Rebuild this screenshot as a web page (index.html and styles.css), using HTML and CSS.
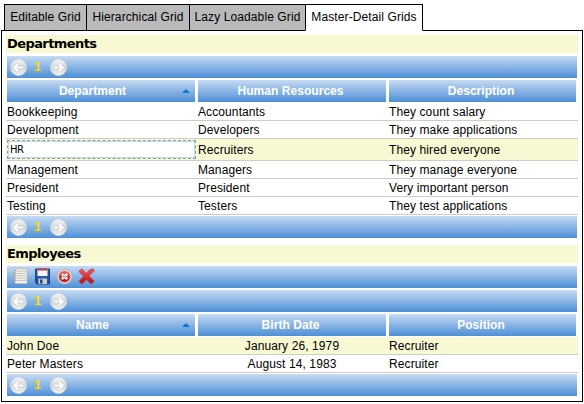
FILE: index.html
```html
<!DOCTYPE html>
<html lang="en">
<head>
<meta charset="utf-8">
<title>Master-Detail Grids</title>
<link rel="stylesheet" href="styles.css">
</head>
<body>
<svg class="defs" width="0" height="0" aria-hidden="true">
  <defs>
    <linearGradient id="ball" x1="0" y1="0" x2="0" y2="1"><stop offset="0" stop-color="#f6f6f6"/><stop offset=".5" stop-color="#d2d4d6"/><stop offset="1" stop-color="#f2f2f2"/></linearGradient>
    <linearGradient id="red" x1="0" y1="0" x2="0" y2="1"><stop offset="0" stop-color="#f0605c"/><stop offset="1" stop-color="#b80c10"/></linearGradient>
    <symbol id="prev" viewBox="0 0 17 17"><circle cx="8.5" cy="8.5" r="8" fill="url(#ball)" stroke="#dcdfe3" stroke-width=".7"/><path d="M13.2 8.5H4.5M8 4.8L4.3 8.5L8 12.2" fill="none" stroke="#c0c2c5" stroke-width="3.2"/><path d="M13.2 8.5H4.5M8 4.8L4.3 8.5L8 12.2" fill="none" stroke="#fff" stroke-width="2.2"/></symbol>
  </defs>
</svg>
<nav class="tabs">
  <a class="tab t1">Editable Grid</a><a class="tab t2">Hierarchical Grid</a><a class="tab t3">Lazy Loadable Grid</a><a class="tab t4 active">Master-Detail Grids</a>
</nav>
<main class="panel">
  <section class="departments">
    <h2>Departments</h2>
    <div class="bar pager"><svg><use href="#prev"/></svg><b>1</b><svg class="next"><use href="#prev"/></svg></div>
    <div class="head"><span>Department<i class="sort"></i></span><span>Human Resources</span><span>Description</span></div>
    <div class="row"><span>Bookkeeping</span><span>Accountants</span><span>They count salary</span></div>
    <div class="row"><span>Development</span><span>Developers</span><span>They make applications</span></div>
    <div class="row editing selected"><span class="field">HR</span><span>Recruiters</span><span>They hired everyone</span></div>
    <div class="row"><span>Management</span><span>Managers</span><span>They manage everyone</span></div>
    <div class="row"><span>President</span><span>President</span><span>Very important person</span></div>
    <div class="row"><span>Testing</span><span>Testers</span><span>They test applications</span></div>
    <div class="bar pager foot"><svg><use href="#prev"/></svg><b>1</b><svg class="next"><use href="#prev"/></svg></div>
  </section>
  <section class="employees">
    <h2>Employees</h2>
    <div class="bar tools">
      <svg viewBox="0 0 17 17"><path d="M3 .8H15V15.5H3Z" fill="#f4f1e9" stroke="#b6b6b2" stroke-width=".7"/><path d="M5 3.2H14M5 5.5H14M5 7.8H14M5 10.1H14M5 12.4H14" stroke="#c4c2bc"/><path d="M2 2.5H4.5M2 5H4.5M2 7.5H4.5M2 10H4.5M2 12.5H4.5" stroke="#c69c79"/></svg>
      <svg viewBox="0 0 17 17"><path d="M1.5 1H15.5V16H3L1.5 14.5Z" fill="#2456a5" stroke="#174384"/><path d="M3.5 1H13.5V8H3.5Z" fill="#f4f5f7"/><path d="M3.5 .7H13.5V2.5H3.5Z" fill="#c83c42"/><path d="M4.5 10.5H13V16H4.5Z" fill="#c9cdd0"/><path d="M6 11.5H8.5V15.5H6Z" fill="#294571"/></svg>
      <svg viewBox="0 0 17 17"><circle cx="8.5" cy="8.5" r="7.6" fill="#d6cdd3" stroke="#b6adb5" stroke-width=".6"/><circle cx="8.5" cy="8.5" r="5.6" fill="url(#red)"/><path d="M5.8 5.8L11.2 11.2M11.2 5.8L5.8 11.2" stroke="#fff" stroke-width="2.4"/><path d="M7 7L10 10M10 7L7 10" stroke="#d66468" stroke-width=".8"/></svg>
      <svg viewBox="0 0 17 17"><path d="M.8 3.5L3.7 .8L8.2 5.5Q11 1.4 14.8 .7L16.4 3Q13.2 4.7 11 8.1L16 13.2L13.2 16L8.4 11.5L3.8 16L1 13.6L5.7 8.2Z" fill="url(#red)" stroke="#b6242a" stroke-width=".6"/></svg>
    </div>
    <div class="bar pager second"><svg><use href="#prev"/></svg><b>1</b><svg class="next"><use href="#prev"/></svg></div>
    <div class="head"><span>Name<i class="sort"></i></span><span>Birth Date</span><span>Position</span></div>
    <div class="row selected"><span>John Doe</span><span class="date">January 26, 1979</span><span>Recruiter</span></div>
    <div class="row"><span>Peter Masters</span><span class="date">August 14, 1983</span><span>Recruiter</span></div>
    <div class="bar pager foot"><svg><use href="#prev"/></svg><b>1</b><svg class="next"><use href="#prev"/></svg></div>
  </section>
</main>
</body>
</html>
```
FILE: styles.css
```css
* { box-sizing: border-box; }
body { margin: 0; width: 584px; height: 404px; padding: 4px 1px 0; overflow: hidden; background: #fff; color: #000; font: 12px "Liberation Sans", Arial, sans-serif; }
.defs { position: absolute; }
.tabs { display: flex; height: 27px; margin-left: 3px; position: relative; }
.tab { height: 27px; border: 1px solid #000; margin-right: -1px; background: #bababa; text-align: center; line-height: 25px; white-space: nowrap; letter-spacing: .1px; }
.t1 { width: 83px; }
.t2 { width: 104px; }
.t3 { width: 117px; }
.t4 { width: 118px; }
.tab.active { background: #fff; border-bottom-color: #fff; }
.panel { width: 582px; height: 372px; margin-top: -1px; border: 1px solid #000; padding: 4px; }
section { width: 572px; }
h2 { margin: 0; height: 18px; padding-left: 1px; background: #f8f8d3; font: bold 13px/18px "DejaVu Sans", Verdana, sans-serif; letter-spacing: -.58px; }
.bar, .head span { background: linear-gradient(#c6dbf3, #8ab4e4 50%, #4c8fd8); }
.bar { width: 570px; height: 22px; margin: 3px 0 2px 1px; display: flex; align-items: center; }
.bar svg { width: 17px; height: 17px; flex: none; }
.pager { padding-left: 3px; }
.pager b { width: 23px; text-align: center; color: #ffdc00; font-size: 13px; line-height: 22px; padding-right: 2px; }
.pager .next { transform: scaleX(-1); }
.second { margin-top: 2px; }
.foot { margin-top: 1px; margin-bottom: 7px; }
.tools { padding-left: 5px; gap: 5px; }
.tools svg { position: relative; top: -1px; }
.head { display: grid; grid-template-columns: 188px 188px 187px; gap: 3px; margin-left: 1px; height: 23px; }
.head span { position: relative; height: 22px; line-height: 22px; text-align: center; color: #fff; font-weight: bold; letter-spacing: .05px; padding-right: 17px; }
.head span:not(:first-child) { padding-right: 3px; }
.sort { position: absolute; right: 5px; top: 9px; border: 4px solid transparent; border-top: 0; border-bottom-color: #087bd0; }
.row { display: grid; grid-template-columns: 191px 191px 1fr; height: 18px; padding-left: 1px; border-bottom: 1px solid #cfcec4; line-height: 18px; letter-spacing: .1px; white-space: nowrap; }
.editing { height: 22px; line-height: 22px; }
.selected { background: #f8f8d3; }
.field { width: 189px; height: 19px; margin-top: 1px; border: 1px dashed #8c9fa0; outline: 1px solid #b5dde3; outline-offset: -2px; background: #fff; padding-left: 2px; font: 10px/17px "DejaVu Sans", Tahoma, sans-serif; letter-spacing: -.4px; }
.date { text-align: center; padding-right: 3px; }
```
